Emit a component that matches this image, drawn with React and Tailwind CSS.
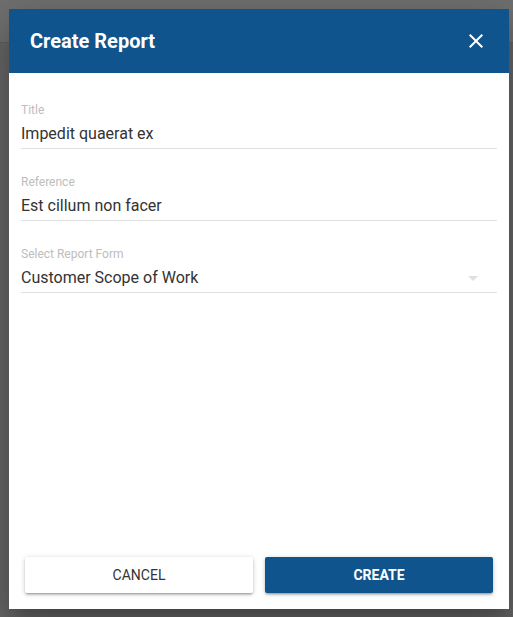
import React from "react";

function Field({ label, value, select }) {
  return (
    <div className="flex flex-col">
      <div className="pt-[1px] text-[12px] leading-[16px] text-[#bdbdbd]">{label}</div>
      <div className="mt-[4px] flex items-center border-b border-[#e0e0e0] pb-[2px]">
        <div className="flex-1 text-[16px] leading-[24px] text-[#333333]">{value}</div>
        {select && (
          <svg width="10" height="5" viewBox="0 0 10 5" className="mr-[19px]">
            <path d="M0 0 L10 0 L5 5 Z" fill="#e0e0e0" />
          </svg>
        )}
      </div>
    </div>
  );
}

export default function App() {
  return (
    <div
      className="relative h-[617px] w-[513px] overflow-hidden bg-[#666666]"
      style={{ fontFamily: "Roboto, 'Liberation Sans', sans-serif" }}
    >
      <div className="absolute inset-x-0 top-0 h-[43px] border-b border-[#5f5f5f] bg-[#707070]" />
      <div className="absolute left-[9px] top-[9px] flex h-[600px] w-[500px] flex-col bg-white shadow-[0_11px_15px_-7px_rgba(0,0,0,0.2),0_24px_38px_3px_rgba(0,0,0,0.14),0_9px_46px_8px_rgba(0,0,0,0.12)]">
        <div className="flex h-[64px] items-center justify-between bg-[#0f548c] pl-[21px] pr-[21px]">
          <div className="text-[20px] font-bold leading-none text-white">Create Report</div>
          <svg width="24" height="24" viewBox="0 0 24 24">
            <path
              d="M19 6.41 17.59 5 12 10.59 6.41 5 5 6.41 10.59 12 5 17.59 6.41 19 12 13.41 17.59 19 19 17.59 13.41 12z"
              fill="white"
            />
          </svg>
        </div>
        <div className="flex flex-1 flex-col gap-[24px] px-[12px] pt-[28px]">
          <Field label="Title" value="Impedit quaerat ex" />
          <Field label="Reference" value="Est cillum non facer" />
          <Field label="Select Report Form" value="Customer Scope of Work" select />
        </div>
        <div className="flex gap-[12px] px-[16px] pb-[16px]">
          <button className="h-[36px] flex-1 rounded-[2px] bg-white text-[14px] font-normal text-[#333333] shadow-[0_1px_5px_rgba(0,0,0,0.2),0_2px_2px_rgba(0,0,0,0.14),0_3px_1px_-2px_rgba(0,0,0,0.12)]">
            CANCEL
          </button>
          <button className="h-[36px] flex-1 rounded-[2px] bg-[#0f548c] text-[14px] font-bold text-white shadow-[0_1px_5px_rgba(0,0,0,0.2),0_2px_2px_rgba(0,0,0,0.14),0_3px_1px_-2px_rgba(0,0,0,0.12)]">
            CREATE
          </button>
        </div>
      </div>
    </div>
  );
}
